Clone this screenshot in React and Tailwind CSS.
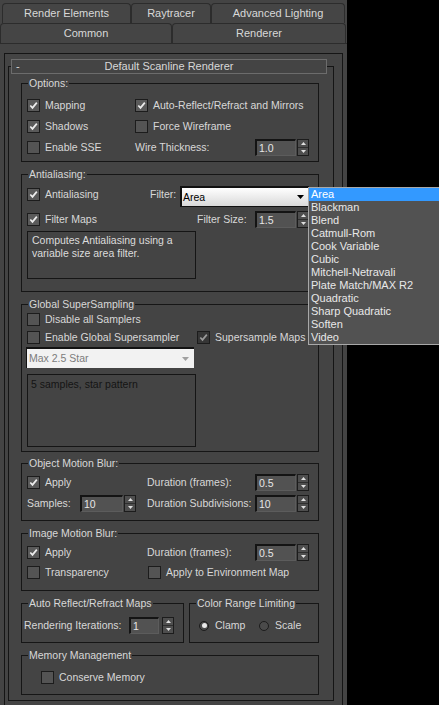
import React from 'react';

const filters = [
  'Area',
  'Blackman',
  'Blend',
  'Catmull-Rom',
  'Cook Variable',
  'Cubic',
  'Mitchell-Netravali',
  'Plate Match/MAX R2',
  'Quadratic',
  'Sharp Quadratic',
  'Soften',
  'Video',
];

function Check({ checked, dim }) {
  return (
    <span
      className={`flex h-[13px] w-[13px] shrink-0 items-center justify-center border border-[#1c1c1c] ${
        dim ? 'bg-[#363636]' : checked ? 'bg-[#5a5a5a]' : 'bg-[#545454]'
      }`}
    >
      {checked && (
        <svg width="9" height="9" viewBox="0 0 9 9">
          <path d="M1.3 4.5 L3.5 6.9 L7.8 1.6" fill="none" stroke={dim ? '#9a9a9a' : '#ededed'} strokeWidth="1.7" />
        </svg>
      )}
    </span>
  );
}

function CheckItem({ label, checked, dim, className = '' }) {
  return (
    <div className={`flex items-center gap-[5px] ${className}`}>
      <Check checked={checked} dim={dim} />
      <span className="whitespace-nowrap">{label}</span>
    </div>
  );
}

function Spinner({ value, w = 'w-[41px]', gap = 'ml-[1px]' }) {
  return (
    <div className="flex items-center">
      <div
        className={`${w} h-[17px] border-t-2 border-l-2 border-r border-b border-t-[#141414] border-l-[#141414] border-r-[#5c5c5c] border-b-[#5c5c5c] bg-[#525252] pl-[2px] leading-[14px] text-[#e6e6e6]`}
      >
        {value}
      </div>
      <div className={`${gap} flex h-[17px] w-[12px] flex-col border border-[#1c1c1c] bg-[#4e4e4e]`}>
        <div className="flex flex-1 items-center justify-center border-b border-[#2e2e2e]">
          <svg width="5" height="3" viewBox="0 0 5 3">
            <path d="M0 3 L2.5 0 L5 3 Z" fill="#e0e0e0" />
          </svg>
        </div>
        <div className="flex flex-1 items-center justify-center">
          <svg width="5" height="3" viewBox="0 0 5 3">
            <path d="M0 0 L5 0 L2.5 3 Z" fill="#e0e0e0" />
          </svg>
        </div>
      </div>
    </div>
  );
}

function Group({ label, className = '', children }) {
  return (
    <div className={`border border-[#161616] ${className}`}>
      <div className="-mt-[7px] ml-[6px] h-[13px] w-fit whitespace-nowrap bg-[#444] px-[1px] leading-[13px]">{label}</div>
      {children}
    </div>
  );
}

function Radio({ on }) {
  return (
    <span className="flex h-[10px] w-[10px] items-center justify-center rounded-full border border-[#1c1c1c] bg-[#4a4a4a]">
      {on && <span className="h-[5px] w-[5px] rounded-full bg-[#e8e8e8]" />}
    </span>
  );
}

function Tab({ label, className = '' }) {
  return (
    <div
      className={`flex items-center justify-center rounded-t-[4px] border border-b-0 border-[#2c2c2c] bg-[#454545] text-[11px] ${className}`}
    >
      {label}
    </div>
  );
}

export default function App() {
  return (
    <div className="relative flex h-[705px] w-[439px] overflow-hidden bg-black font-['Liberation_Sans',Arial,sans-serif] text-[10.5px] leading-[13px] text-[#d8d8d8]">
      <div className="flex w-[347px] shrink-0 flex-col bg-[#444]">
        {/* tabs */}
        <div className="flex h-[20px] mt-[3px] pl-[2px]">
          <Tab label="Render Elements" className="w-[129px]" />
          <Tab label="Raytracer" className="w-[80px]" />
          <Tab label="Advanced Lighting" className="w-[134px]" />
        </div>
        <div className="flex h-[21px] border-b border-[#2c2c2c]">
          <Tab label="Common" className="w-[172px]" />
          <Tab label="Renderer" className="w-[174px]" />
        </div>

        {/* rollout */}
        <div className="ml-[4px] mt-[9px] w-[339px] flex-1 border-l border-t border-r border-[#151515]">
          <div className="ml-[3px] mt-[12px] h-[635px] w-[326px] border border-[#151515]">
            <div className="-mt-[8px] ml-[2px] grid h-[15px] w-[316px] grid-cols-[20px_1fr_20px] items-center border border-[#6c6c6c] bg-[#444] text-[11px]">
              <span className="pl-[4px]">-</span>
              <span className="text-center">Default Scanline Renderer</span>
              <span />
            </div>

            <div className="ml-[12px] w-[298px]">
              <Group label="Options:" className="mt-[9px] h-[79px]">
                <div className="mt-[5px] pl-[5px]">
                  <div className="flex h-[21px] items-center">
                    <CheckItem label="Mapping" checked className="w-[108px]" />
                    <CheckItem label="Auto-Reflect/Refract and Mirrors" checked />
                  </div>
                  <div className="flex h-[21px] items-center">
                    <CheckItem label="Shadows" checked className="w-[108px]" />
                    <CheckItem label="Force Wireframe" />
                  </div>
                  <div className="flex h-[21px] items-center">
                    <CheckItem label="Enable SSE" className="w-[108px]" />
                    <span className="w-[120px] whitespace-nowrap">Wire Thickness:</span>
                    <Spinner value="1.0" />
                  </div>
                </div>
              </Group>

              <Group label="Antialiasing:" className="mt-[12px] h-[118px]">
                <div className="pl-[5px]">
                  <div className="mt-[3px] flex h-[21px] items-center">
                    <CheckItem label="Antialiasing" checked className="w-[123px]" />
                    <span className="w-[30px]">Filter:</span>
                    <div className="mt-[4px] flex h-[21px] w-[129px] items-center justify-between border-2 border-b border-r border-[#111] bg-gradient-to-b from-[#ffffff] to-[#d9d9d9] pl-[1px] pr-[4px] text-[#000]">
                      <span>Area</span>
                      <svg width="7" height="4" viewBox="0 0 7 4">
                        <path d="M0 0 L7 0 L3.5 4 Z" fill="#000" />
                      </svg>
                    </div>
                  </div>
                  <div className="mt-[6px] flex h-[17px] items-center">
                    <CheckItem label="Filter Maps" checked className="w-[170px]" />
                    <span className="w-[58px] whitespace-nowrap">Filter Size:</span>
                    <Spinner value="1.5" />
                  </div>
                  <div className="mt-[3px] h-[48px] w-[169px] border border-[#151515] pl-[4px] pt-[2px] text-[#dcdcdc]">
                    Computes Antialiasing using a
                    <br />
                    variable size area filter.
                  </div>
                </div>
              </Group>

              <Group label="Global SuperSampling" className="mt-[12px] h-[148px]">
                <div className="pl-[5px]">
                  <div className="flex h-[17px] items-center">
                    <CheckItem label="Disable all Samplers" />
                  </div>
                  <div className="mt-[1px] flex h-[17px] items-center">
                    <CheckItem label="Enable Global Supersampler" className="w-[170px]" />
                    <CheckItem label="Supersample Maps" checked dim />
                  </div>
                  <div className="-ml-[1px] mt-[1px] flex h-[21px] w-[168px] items-center justify-between border-t-2 border-l border-[#121212] bg-[#f2f2f2] pl-[2px] pr-[5px] text-[#7c7c7c]">
                    <span>Max 2.5 Star</span>
                    <svg width="7" height="4" viewBox="0 0 7 4">
                      <path d="M0 0 L7 0 L3.5 4 Z" fill="#a0a0a0" />
                    </svg>
                  </div>
                  <div className="mt-[6px] h-[73px] w-[169px] border border-[#151515] pl-[3px] pt-[3px] text-[#141414]">
                    5 samples, star pattern
                  </div>
                </div>
              </Group>

              <Group label="Object Motion Blur:" className="mt-[11px] h-[58px]">
                <div className="pl-[5px]">
                  <div className="mt-[4px] flex h-[17px] items-center">
                    <CheckItem label="Apply" checked className="w-[120px]" />
                    <span className="w-[108px] whitespace-nowrap">Duration (frames):</span>
                    <Spinner value="0.5" />
                  </div>
                  <div className="mt-[4px] flex h-[17px] items-center">
                    <div className="flex w-[120px] items-center">
                      <span className="w-[53px]">Samples:</span>
                      <Spinner value="10" w="w-[43px]" />
                    </div>
                    <span className="w-[108px] whitespace-nowrap">Duration Subdivisions:</span>
                    <Spinner value="10" />
                  </div>
                </div>
              </Group>

              <Group label="Image Motion Blur:" className="mt-[12px] h-[58px]">
                <div className="pl-[5px]">
                  <div className="mt-[4px] flex h-[17px] items-center">
                    <CheckItem label="Apply" checked className="w-[120px]" />
                    <span className="w-[108px] whitespace-nowrap">Duration (frames):</span>
                    <Spinner value="0.5" />
                  </div>
                  <div className="mt-[3px] flex h-[17px] items-center">
                    <CheckItem label="Transparency" className="w-[121px]" />
                    <CheckItem label="Apply to Environment Map" />
                  </div>
                </div>
              </Group>

              <div className="mt-[12px] flex gap-[5px]">
                <Group label="Auto Reflect/Refract Maps" className="h-[40px] w-[163px]">
                  <div className="mt-[7px] flex h-[17px] items-center pl-[2px]">
                    <span className="w-[105px] whitespace-nowrap">Rendering Iterations:</span>
                    <Spinner value="1" w="w-[30px]" gap="ml-[3px]" />
                  </div>
                </Group>
                <Group label="Color Range Limiting" className="h-[40px] w-[130px]">
                  <div className="mt-[7px] flex h-[17px] items-center pl-[9px]">
                    <div className="flex w-[60px] items-center gap-[6px]">
                      <Radio on />
                      <span>Clamp</span>
                    </div>
                    <div className="flex items-center gap-[6px]">
                      <Radio />
                      <span>Scale</span>
                    </div>
                  </div>
                </Group>
              </div>

              <Group label="Memory Management" className="mt-[12px] h-[40px]">
                <div className="mt-[7px] flex h-[17px] items-center pl-[19px]">
                  <CheckItem label="Conserve Memory" />
                </div>
              </Group>
            </div>
          </div>
        </div>
      </div>

      {/* open filter list */}
      <div className="absolute left-[308px] top-[187px] w-[140px] border border-[#a8a8a8] bg-[#525252] text-[11px] text-[#e8e8e8]">
        {filters.map((f, i) => (
          <div key={f} className={`h-[13px] pl-[2px] leading-[13px] ${i === 0 ? 'bg-[#3399ff] text-white' : ''}`}>
            {f}
          </div>
        ))}
      </div>
    </div>
  );
}
